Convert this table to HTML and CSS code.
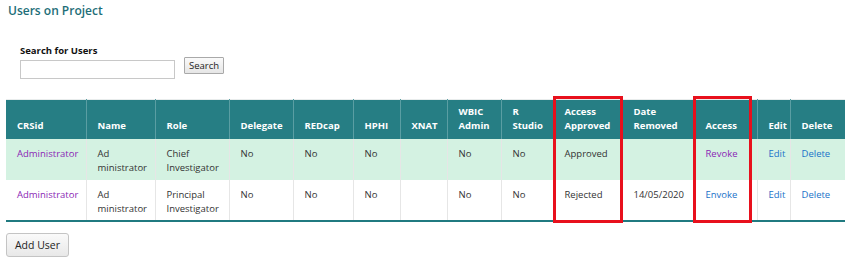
FILE: index.html
```html
<!DOCTYPE html>
<html>
<head>
<meta charset="utf-8">
<link rel="stylesheet" href="styles.css">
</head>
<body>
<div class="page">
  <h2 class="title">Users on Project</h2>
  <div class="search">
    <label class="search-label">Search for Users</label>
    <div class="search-row">
      <input class="search-input" type="text">
      <button class="btn-small">Search</button>
    </div>
  </div>
  <div class="table-wrap">
    <table class="users">
      <colgroup>
        <col style="width:80px"><col style="width:69px"><col style="width:74px"><col style="width:64px"><col style="width:60px"><col style="width:47px"><col style="width:47px"><col style="width:54px"><col style="width:52px"><col style="width:69px"><col style="width:72px"><col style="width:63px"><col style="width:33px"><col style="width:55px">
      </colgroup>
      <thead>
        <tr>
          <th>CRSid</th><th>Name</th><th>Role</th><th>Delegate</th><th>REDcap</th><th>HPHI</th><th>XNAT</th><th>WBIC<br>Admin</th><th>R<br>Studio</th><th>Access<br>Approved</th><th>Date<br>Removed</th><th>Access</th><th>Edit</th><th>Delete</th>
        </tr>
      </thead>
      <tbody>
        <tr class="alt">
          <td><a class="visited">Administrator</a></td><td>Ad<br>ministrator</td><td>Chief<br>Investigator</td><td>No</td><td>No</td><td>No</td><td></td><td>No</td><td>No</td><td>Approved</td><td></td><td><a class="visited">Revoke</a></td><td><a class="link">Edit</a></td><td><a class="link">Delete</a></td>
        </tr>
        <tr>
          <td><a class="visited">Administrator</a></td><td>Ad<br>ministrator</td><td>Principal<br>Investigator</td><td>No</td><td>No</td><td>No</td><td></td><td>No</td><td>No</td><td>Rejected</td><td>14/05/2020</td><td><a class="link">Envoke</a></td><td><a class="link">Edit</a></td><td><a class="link">Delete</a></td>
        </tr>
      </tbody>
    </table>
    <div class="mark mark-approved"></div>
    <div class="mark mark-access"></div>
  </div>
  <button class="btn-add">Add User</button>
</div>
</body>
</html>
```
FILE: styles.css
```css
html, body { margin: 0; padding: 0; background: #fff; }
body {
  font-family: "Open Sans", "Noto Sans", sans-serif;
  font-size: 9.5px;
  color: #222;
}
.page { padding: 0 0 0 6px; }
.title {
  margin: 0;
  padding: 2px 0 0 2px;
  font-size: 12px;
  font-weight: 600;
  color: #1d6e78;
  height: 20px;
  line-height: 18px;
}
.search { padding: 22px 0 0 14px; }
.search-label { display: block; font-weight: 700; font-size: 9.5px; color: #111; line-height: 13px; }
.search-row { display: flex; align-items: flex-start; gap: 9px; margin-top: 0; }
.search-input {
  width: 155px; height: 19px; box-sizing: border-box;
  border: 1px solid #c8c8c8; margin: 3px 0 0 0; padding: 0;
}
.btn-small {
  font-family: inherit; font-size: 9.5px; color: #222;
  height: 17px; padding: 0 4px; margin-top: 0;
  border: 1px solid #a9a9a9; background: linear-gradient(#fafafa, #e6e6e6);
  border-radius: 1px;
}
.table-wrap { position: relative; margin-top: 20px; width: 839px; }
.users {
  border-collapse: collapse; table-layout: fixed; width: 839px;
  border-top: 1px solid #e8ecec;
  border-bottom: 2px solid #207a80;
}
.users thead tr { height: 39px; }
.users tbody tr { height: 41px; }
.users th {
  background: #267e84; color: #fff; font-weight: 700; text-align: left;
  vertical-align: bottom; padding: 0 0 6px 11px; line-height: 14px;
  border-left: 1px solid #5a9ea3;
}
.users th:first-child { border-left: none; }
.users td {
  vertical-align: top; padding: 8px 0 0 11px; line-height: 14px;
  border-left: 1px solid #e6e6e6; color: #333;
}
.users td:first-child { border-left: none; }
.users tr.alt td { background: #d4f2e2; }
.visited { color: #8b1fb5; }
.link { color: #1a72c9; }
.mark { position: absolute; border: 3px solid #e8101c; top: -3px; height: 121px; }
.mark-approved { left: 547px; width: 64px; }
.mark-access { left: 687px; width: 53px; }
.btn-add {
  display: block; margin-top: 11px;
  font-family: inherit; font-size: 10.5px; color: #222;
  height: 24px; width: 63px; padding: 0;
  border: 1px solid #c4c4c4; border-radius: 3px;
  background: linear-gradient(#fafafa, #e8e8e8);
}
```
